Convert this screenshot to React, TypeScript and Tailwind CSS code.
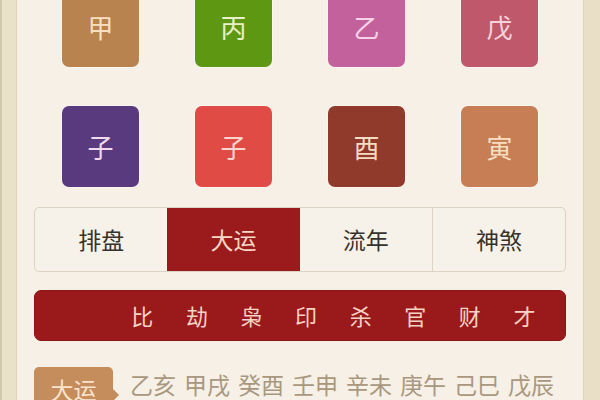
import React from "react";

const font = { fontFamily: '"Noto Sans CJK SC", "Noto Sans", sans-serif' };

const row1 = [
  { c: "甲", bg: "bg-[#b9834f]", fg: "text-[#f7dfc2]" },
  { c: "丙", bg: "bg-[#5e9712]", fg: "text-[#eaf0c8]" },
  { c: "乙", bg: "bg-[#c2619c]", fg: "text-[#f7d2e8]" },
  { c: "戊", bg: "bg-[#c0586b]", fg: "text-[#f7d4da]" },
];
const row2 = [
  { c: "子", bg: "bg-[#5a3a7f]", fg: "text-[#f0daee]" },
  { c: "子", bg: "bg-[#e04b45]", fg: "text-[#fad6cc]" },
  { c: "酉", bg: "bg-[#8f3a2b]", fg: "text-[#f6dac2]" },
  { c: "寅", bg: "bg-[#c77e55]", fg: "text-[#f9dfc2]" },
];

const tabs = ["排盘", "大运", "流年", "神煞"];
const gods = ["比", "劫", "枭", "印", "杀", "官", "财", "才"];
const yun = ["乙亥", "甲戌", "癸酉", "壬申", "辛未", "庚午", "己巳", "戊辰"];

function Tile({ c, bg, fg }: { c: string; bg: string; fg: string }) {
  return (
    <div className="flex justify-center">
      <div
        className={`w-[77px] h-[81px] rounded-[7px] flex items-center justify-center text-[26px] leading-none shadow-[0_0_0_1px_rgba(255,255,255,0.35)] ${bg} ${fg}`}
      >
        {c}
      </div>
    </div>
  );
}

export default function App() {
  return (
    <div className="w-[600px] h-[400px] overflow-hidden flex bg-[#f6f0e6]" style={font}>
      <div className="w-[17px] shrink-0 flex">
        <div className="w-[2px] bg-[#d2c8ae]" />
        <div className="flex-1 bg-[#e9e1c8] border-r border-[#ddd3b8]" />
      </div>
      <div className="flex-1 px-[17px] flex flex-col">
        <div className="shrink-0 grid grid-cols-4 mt-[-14px]">
          {row1.map((t, i) => (
            <Tile key={i} {...t} />
          ))}
        </div>
        <div className="shrink-0 grid grid-cols-4 mt-[39px]">
          {row2.map((t, i) => (
            <Tile key={i} {...t} />
          ))}
        </div>
        <div className="shrink-0 mt-[20px] h-[65px] flex border border-[#dcd3c4] rounded-[5px] overflow-hidden bg-[#f7f2e9]">
          {tabs.map((t, i) => (
            <div
              key={t}
              className={`flex-1 flex items-center justify-center text-[23px] ${
                i === 1 ? "bg-[#9b1b1c] text-[#f7d7c6]" : "text-[#36312c]"
              } ${i === 3 ? "border-l border-[#dcd3c4]" : ""}`}
            >
              {t}
            </div>
          ))}
        </div>
        <div className="shrink-0 mt-[18px] h-[51px] rounded-[7px] bg-[#9a1a1c] border border-[#8a1416] flex items-center pl-[80px]">
          {gods.map((g) => (
            <div key={g} className="w-[54.6px] text-center text-[22px] text-[#f6d3c4]">
              {g}
            </div>
          ))}
        </div>
        <div className="shrink-0 mt-[26px] flex items-start">
          <div className="relative w-[79px] h-[52px] bg-[#c58c5c] rounded-[5px] flex justify-center pt-[7px]">
            <span className="text-[23px] leading-none text-[#f9e4cc] mt-[4px]">大运</span>
            <div className="absolute right-[-6px] top-[22px] w-0 h-0 border-y-[6px] border-y-transparent border-l-[6px] border-l-[#c58c5c]" />
          </div>
          <div className="ml-[17px] mt-[6px] flex gap-[8px] text-[23px] leading-none text-[#a99880]">
            {yun.map((y) => (
              <span key={y}>{y}</span>
            ))}
          </div>
        </div>
      </div>
      <div className="w-[17px] shrink-0 bg-[#e8dfc6] border-l border-[#ddd4bb]" />
    </div>
  );
}
